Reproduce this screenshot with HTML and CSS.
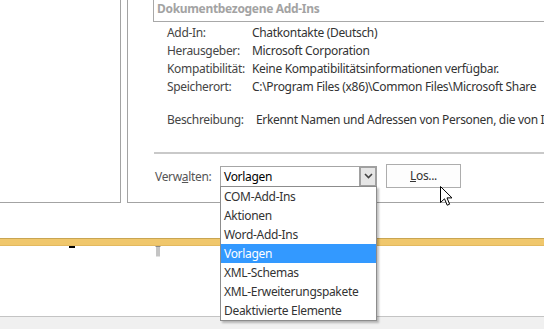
FILE: index.html
```html
<!DOCTYPE html>
<html lang="de">
<head>
<meta charset="utf-8">
<link rel="stylesheet" href="styles.css">
</head>
<body>
<div class="page">
  <div class="upper">
    <div class="left-panel"></div>
    <div class="right-panel">
      <div class="group-header">Dokumentbezogene Add-Ins</div>
      <div class="info">
        <span class="lbl">Add-In:</span><span class="val">Chatkontakte (Deutsch)</span>
        <span class="lbl">Herausgeber:</span><span class="val">Microsoft Corporation</span>
        <span class="lbl">Kompatibilität:</span><span class="val">Keine Kompatibilitätsinformationen verfügbar.</span>
        <span class="lbl">Speicherort:</span><span class="val">C:\Program Files (x86)\Common Files\Microsoft Share</span>
      </div>
      <div class="desc">
        <span class="lbl">Beschreibung:</span><span class="val">Erkennt Namen und Adressen von Personen, die von Ih</span>
      </div>
      <div class="separator"></div>
      <div class="manage">
        <span class="manage-label">Verw<u>a</u>lten:</span>
        <div class="select">
          <span class="select-text">Vorlagen</span>
          <span class="select-btn">
            <svg width="9" height="6" viewBox="0 0 9 6"><path d="M1 1 L4.5 4.5 L8 1" fill="none" stroke="#444" stroke-width="1.6"/></svg>
          </span>
        </div>
        <div class="btn"><u>L</u>os...</div>
      </div>
    </div>
  </div>
  <div class="doc">
    <div class="ruler-bar"></div>
    <div class="mark-dash"></div>
    <svg class="mark-indent" width="6" height="11" viewBox="0 0 6 11"><path d="M0.5 0.5 H5.5 M2 0.5 V10.5 M4 0.5 V10.5" stroke="#8a8a8a" stroke-width="1" fill="none"/></svg>
  </div>
  <div class="status"></div>

  <ul class="dropdown">
    <li>COM-Add-Ins</li>
    <li>Aktionen</li>
    <li>Word-Add-Ins</li>
    <li class="selected">Vorlagen</li>
    <li>XML-Schemas</li>
    <li>XML-Erweiterungspakete</li>
    <li>Deaktivierte Elemente</li>
  </ul>

  <svg class="cursor" width="13" height="21" viewBox="0 0 13 21">
    <path d="M0.5 0.5 L0.5 16.5 L4.5 12.8 L7.2 19.2 L9.6 18.2 L7 11.9 L12 11.9 Z" fill="#fff" stroke="#000" stroke-width="1" stroke-linejoin="miter"/>
  </svg>
</div>
</body>
</html>
```

FILE: styles.css
```css
* { box-sizing: border-box; }
html, body { margin: 0; padding: 0; }
body {
  width: 544px;
  height: 329px;
  overflow: hidden;
  background: #fff;
  font-family: "Noto Sans", "Open Sans", sans-serif;
  font-size: 12px;
  letter-spacing: -0.32px;
  color: #3a3a3a;
}
.page {
  position: relative;
  width: 544px;
  height: 329px;
  display: flex;
  flex-direction: column;
}
.upper {
  display: flex;
  height: 203px;
  gap: 6px;
}
.left-panel {
  width: 121px;
  border-right: 1px solid #a3a3a3;
  border-bottom: 1px solid #a3a3a3;
}
.right-panel {
  flex: 1;
  border-left: 1px solid #a3a3a3;
  border-bottom: 1px solid #a3a3a3;
  padding-left: 25px;
  white-space: nowrap;
  overflow: hidden;
}
.group-header {
  height: 22px;
  border-left: 1px solid #a8a8a8;
  border-bottom: 1px solid #a8a8a8;
  padding-left: 3px;
  line-height: 17px;
  font-weight: bold;
  color: #a3a3a3;
}
.info {
  display: grid;
  grid-template-columns: 85px auto;
  margin: 2px 0 0 14px;
  line-height: 18px;
}
.desc {
  display: flex;
  margin: 15px 0 0 14px;
  line-height: 18px;
}
.desc .lbl { width: 89px; flex-shrink: 0; }
.lbl { color: #454545; }
.val { color: #333; }
.separator {
  height: 2px;
  margin: 23px 0 0 1px;
  background: #c9c9c9;
}
.manage {
  display: flex;
  align-items: center;
  margin-top: 10px;
  height: 24px;
}
.manage-label {
  width: 67px;
  flex-shrink: 0;
  padding-left: 2px;
  color: #555;
}
.select {
  width: 157px;
  flex-shrink: 0;
  height: 21px;
  border: 1px solid #a6a6a6;
  display: flex;
  align-items: center;
  background: #fff;
}
.select-text {
  flex: 1;
  padding-left: 3px;
  color: #000;
}
.select-btn {
  width: 18px;
  height: 21px;
  margin: -1px -1px -1px 0;
  border: 2px solid #a0a0a0;
  background: #e6e6e6;
  display: flex;
  align-items: center;
  justify-content: center;
}
.btn {
  margin-left: 9px;
  width: 75px;
  flex-shrink: 0;
  height: 24px;
  border: 1px solid #adadad;
  background: #fdfdfd;
  text-align: center;
  line-height: 22px;
  color: #333;
}
.doc {
  position: relative;
  height: 113px;
  padding-top: 35px;
}
.ruler-bar {
  height: 8px;
  background: #f0c76c;
  border-top: 1px solid #c9a552;
  border-bottom: 1px solid #e3b95f;
}
.mark-dash {
  position: absolute;
  left: 69px;
  top: 43px;
  width: 6px;
  height: 2px;
  background: #000;
}
.mark-indent {
  position: absolute;
  left: 155px;
  top: 43px;
}
.status {
  flex: 1;
  border-top: 1px solid #c4c4c4;
  background: #f0f0f0;
}
.dropdown {
  position: absolute;
  left: 220px;
  top: 186px;
  width: 157px;
  margin: 0;
  padding: 0;
  list-style: none;
  background: #fff;
  border: 1px solid #8c8c8c;
  box-shadow: 2px 2px 2px rgba(0,0,0,0.25);
}
.dropdown li {
  height: 19px;
  line-height: 19px;
  padding-left: 3px;
  color: #333;
  white-space: nowrap;
}
.dropdown li.selected {
  background: #3399ff;
  color: #fff;
}
.cursor {
  position: absolute;
  left: 440px;
  top: 186px;
}
```
